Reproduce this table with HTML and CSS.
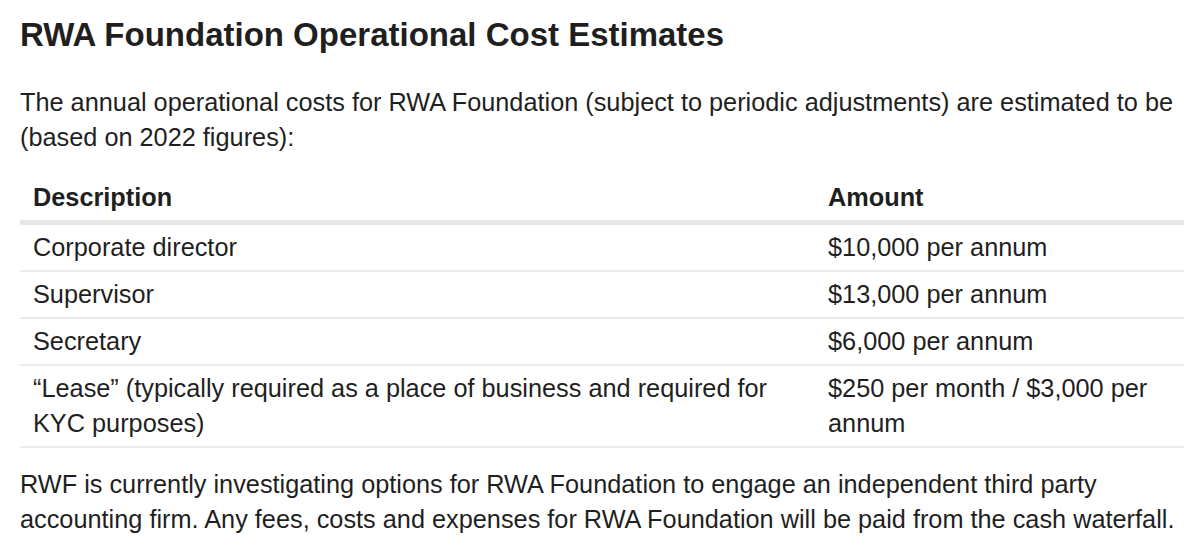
FILE: index.html
```html
<!DOCTYPE html>
<html>
<head>
<meta charset="utf-8">
<link rel="stylesheet" href="styles.css">
</head>
<body>
<main class="doc">
  <h2 class="title">RWA Foundation Operational Cost Estimates</h2>
  <p class="para">The annual operational costs for RWA Foundation (subject to periodic adjustments) are estimated to be (based on 2022 figures):</p>
  <table class="costs">
    <thead>
      <tr><th class="c-desc">Description</th><th class="c-amt">Amount</th></tr>
    </thead>
    <tbody>
      <tr><td>Corporate director</td><td>$10,000 per annum</td></tr>
      <tr><td>Supervisor</td><td>$13,000 per annum</td></tr>
      <tr><td>Secretary</td><td>$6,000 per annum</td></tr>
      <tr><td>“Lease” (typically required as a place of business and required for KYC purposes)</td><td>$250 per month / $3,000 per annum</td></tr>
    </tbody>
  </table>
  <p class="para">RWF is currently investigating options for RWA Foundation to engage an independent third party accounting firm. Any fees, costs and expenses for RWA Foundation will be paid from the cash waterfall.</p>
</main>
</body>
</html>
```
FILE: styles.css
```css
html, body {
  margin: 0;
  padding: 0;
  background: #ffffff;
}
body {
  font-family: "Liberation Sans", Arial, sans-serif;
  color: #1f1f1f;
}
.doc {
  padding: 15px 16px 0 20px;
  width: 1164px;
}
.title {
  font-size: 33px;
  font-weight: bold;
  line-height: 40px;
  margin: 0 0 30px 0;
}
.para {
  font-size: 25.3px;
  line-height: 35px;
  margin: 0;
}
.costs {
  width: 1164px;
  border-collapse: collapse;
  font-size: 25.3px;
  line-height: 35px;
  margin: 19px 0 19px 0;
}
.costs th {
  text-align: left;
  font-weight: bold;
  padding: 6px 13px 5px 13px;
  border-bottom: 5px solid #e6e6e6;
}
.costs td {
  padding: 5px 13px 5px 13px;
  border-bottom: 2px solid #ebebeb;
  vertical-align: top;
}
.c-desc {
  width: 769px;
}
```
